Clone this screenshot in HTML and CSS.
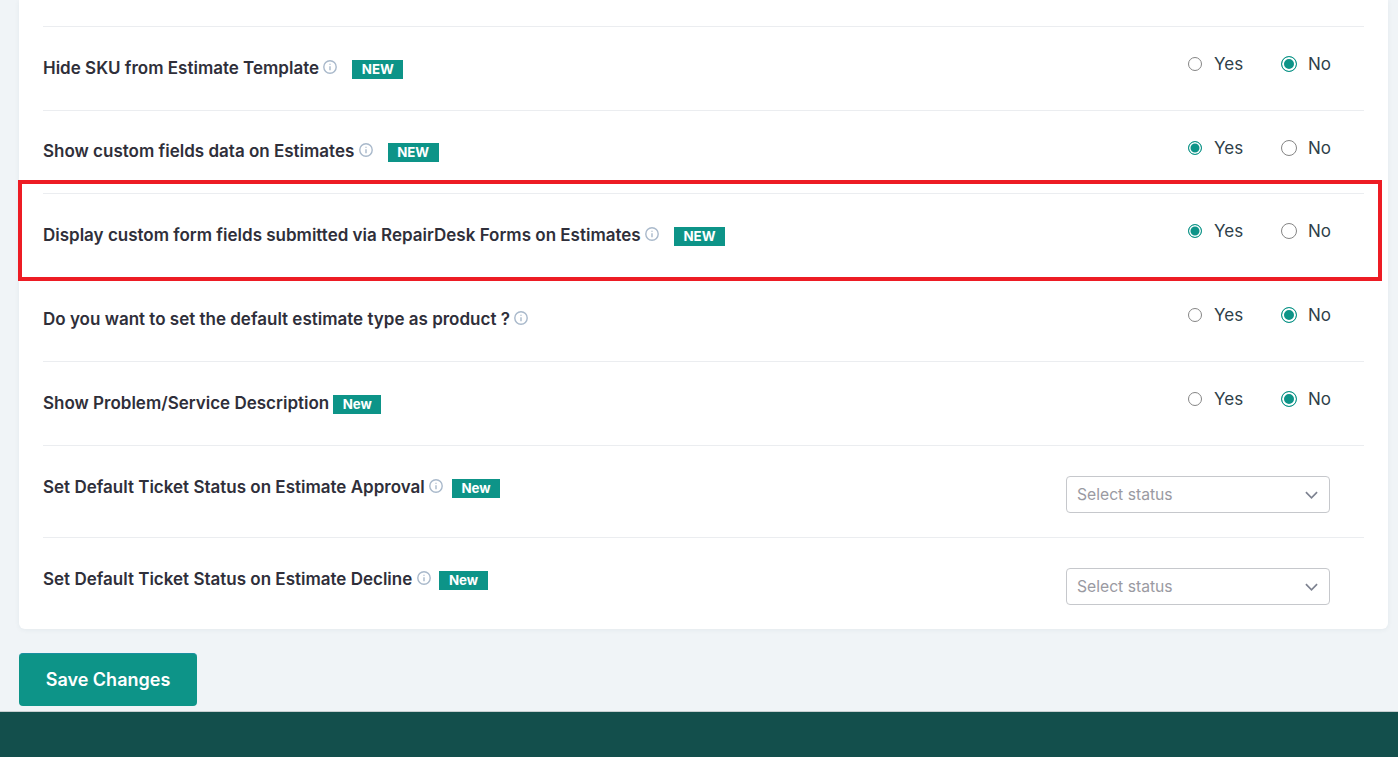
FILE: index.html
```html
<!DOCTYPE html>
<html lang="en">
<head>
<meta charset="utf-8">
<title>Estimate settings</title>
<link rel="stylesheet" href="styles.css">
</head>
<body>
<main class="content">
  <section class="card">
    <div class="row">
      <div class="label">Hide SKU from Estimate Template<svg class="info" viewBox="0 0 14 14"><circle cx="7" cy="7" r="6.2"/><path d="M7 6.2v4M7 3.7v1.1"/></svg><span class="badge gap">NEW</span></div>
      <div class="radios"><span class="opt"><i class="radio"></i>Yes</span><span class="opt"><i class="radio on"></i>No</span></div>
    </div>
    <div class="row">
      <div class="label">Show custom fields data on Estimates<svg class="info" viewBox="0 0 14 14"><circle cx="7" cy="7" r="6.2"/><path d="M7 6.2v4M7 3.7v1.1"/></svg><span class="badge gap">NEW</span></div>
      <div class="radios"><span class="opt"><i class="radio on"></i>Yes</span><span class="opt"><i class="radio"></i>No</span></div>
    </div>
    <div class="row">
      <div class="label">Display custom form fields submitted via RepairDesk Forms on Estimates<svg class="info" viewBox="0 0 14 14"><circle cx="7" cy="7" r="6.2"/><path d="M7 6.2v4M7 3.7v1.1"/></svg><span class="badge gap">NEW</span></div>
      <div class="radios"><span class="opt"><i class="radio on"></i>Yes</span><span class="opt"><i class="radio"></i>No</span></div>
    </div>
    <div class="row">
      <div class="label">Do you want to set the default estimate type as product ?<svg class="info" viewBox="0 0 14 14"><circle cx="7" cy="7" r="6.2"/><path d="M7 6.2v4M7 3.7v1.1"/></svg></div>
      <div class="radios"><span class="opt"><i class="radio"></i>Yes</span><span class="opt"><i class="radio on"></i>No</span></div>
    </div>
    <div class="row">
      <div class="label">Show Problem/Service Description<span class="badge mixed">New</span></div>
      <div class="radios"><span class="opt"><i class="radio"></i>Yes</span><span class="opt"><i class="radio on"></i>No</span></div>
    </div>
    <div class="row row-select">
      <div class="label">Set Default Ticket Status on Estimate Approval<svg class="info" viewBox="0 0 14 14"><circle cx="7" cy="7" r="6.2"/><path d="M7 6.2v4M7 3.7v1.1"/></svg><span class="badge mixed after-info">New</span></div>
      <div class="select">Select status<svg class="chev" viewBox="0 0 14 8"><path d="M1 1l6 6 6-6"/></svg></div>
    </div>
    <div class="row row-select">
      <div class="label">Set Default Ticket Status on Estimate Decline<svg class="info" viewBox="0 0 14 14"><circle cx="7" cy="7" r="6.2"/><path d="M7 6.2v4M7 3.7v1.1"/></svg><span class="badge mixed after-info">New</span></div>
      <div class="select">Select status<svg class="chev" viewBox="0 0 14 8"><path d="M1 1l6 6 6-6"/></svg></div>
    </div>
  </section>
  <button class="save" type="button">Save Changes</button>
</main>
<footer class="footer"></footer>
<div class="highlight"></div>
</body>
</html>
```
FILE: styles.css
```css
html, body {
  margin: 0;
  padding: 0;
  height: 757px;
  overflow: hidden;
  background: #f0f4f7;
  font-family: Inter, "Liberation Sans", sans-serif;
  color: #2f2f3a;
}
.content {
  padding: 0 10px 0 19px;
  height: 711px;
  box-sizing: border-box;
}
.card {
  background: #fff;
  height: 629px;
  box-sizing: border-box;
  padding: 26px 24px 0;
  border-radius: 0 0 6px 6px;
  box-shadow: 0 1px 5px rgba(40, 60, 80, 0.06);
}
.row {
  display: flex;
  justify-content: space-between;
  align-items: flex-start;
  height: 84px;
  box-sizing: border-box;
  border-top: 1px solid #ebedf0;
  padding-top: 30px;
}
.row:nth-child(2) { height: 83px; }
.row:nth-child(2) .label { margin-top: -1px; }
.row-select {
  height: 92px;
  padding-top: 30px;
}
.label {
  display: flex;
  align-items: flex-start;
  font-size: 17px;
  font-weight: 600;
  line-height: 23px;
  white-space: nowrap;
}
.info {
  width: 14px;
  height: 14px;
  margin: 3px 0 0 4.4px;
  fill: none;
  stroke: #a9b9cb;
  stroke-width: 1.4;
}
.badge {
  background: #0d9488;
  color: #fff;
  font-size: 13.3px;
  font-weight: 700;
  line-height: 19px;
  padding: 0 9.6px;
  margin-top: 3px;
}
.badge.gap { margin-left: 14.8px; }
.badge.mixed { margin-left: 4px; padding: 0 9.5px; }
.badge.after-info { margin-left: 8.8px; }
.radios {
  display: flex;
  gap: 38px;
  width: 176px;
  margin-top: -5px;
  font-size: 17px;
  line-height: 24px;
  color: #2f3f4a;
}
.opt {
  display: flex;
  align-items: center;
  gap: 12px;
  width: 55px;
}
.opt + .opt { gap: 11px; }
.radio {
  width: 14px;
  height: 14px;
  box-sizing: border-box;
  border-radius: 50%;
  border: 1px solid #858585;
  background: #fff;
  flex: none;
}
.opt + .opt .radio {
  width: 16px;
  height: 16px;
}
.radio.on {
  border-color: #0d9488;
  background: #0d9488;
  box-shadow: inset 0 0 0 1.5px #fff;
}
.opt + .opt .radio.on { box-shadow: inset 0 0 0 2px #fff; }
.select {
  display: flex;
  align-items: center;
  justify-content: space-between;
  box-sizing: border-box;
  width: 264px;
  height: 37px;
  margin: 0 34px 0 0;
  padding: 0 11px 0 10px;
  border: 1px solid #c6c8cc;
  border-radius: 4px;
  font-size: 15.7px;
  color: #9a9aa2;
}
.chev {
  width: 13px;
  height: 8px;
  fill: none;
  stroke: #7d8290;
  stroke-width: 1.8;
}
.save {
  display: block;
  margin-top: 24px;
  width: 178px;
  height: 53px;
  padding: 0 0 2px;
  border: 0;
  border-top: 1px solid #1a8fa0;
  border-radius: 4px;
  background: #0d9488;
  color: #fff;
  font: 600 18px Inter, "Liberation Sans", sans-serif;
}
.footer {
  height: 46px;
  background: #134f4c;
  border-top: 1px solid #c8cfd0;
}
.highlight {
  position: absolute;
  left: 18px;
  top: 180px;
  width: 1364px;
  height: 101px;
  box-sizing: border-box;
  border: 4px solid #ed1c24;
}
```
